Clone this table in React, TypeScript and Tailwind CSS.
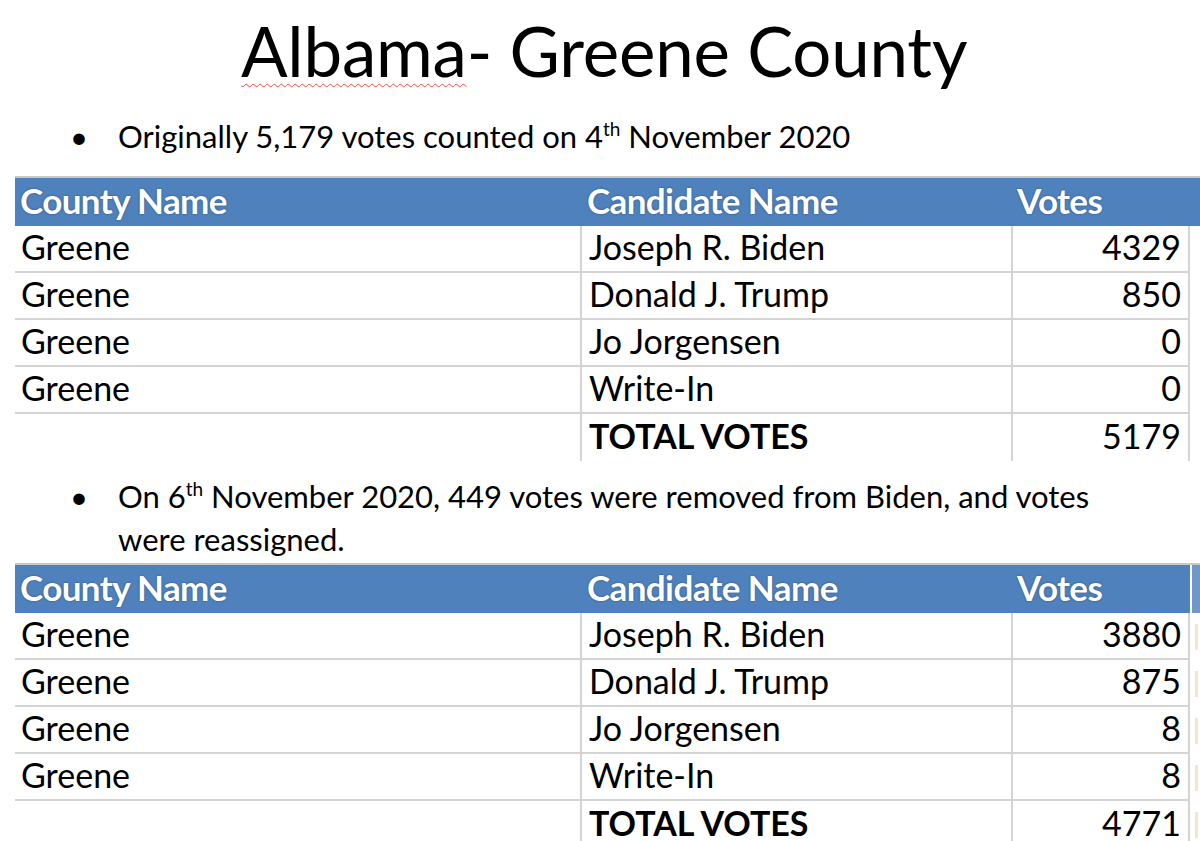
import React from 'react';

type Row = { county: string; candidate: string; votes: string; total?: boolean };

const first: Row[] = [
  { county: 'Greene', candidate: 'Joseph R. Biden', votes: '4329' },
  { county: 'Greene', candidate: 'Donald J. Trump', votes: '850' },
  { county: 'Greene', candidate: 'Jo Jorgensen', votes: '0' },
  { county: 'Greene', candidate: 'Write-In', votes: '0' },
  { county: '', candidate: 'TOTAL VOTES', votes: '5179', total: true },
];

const second: Row[] = [
  { county: 'Greene', candidate: 'Joseph R. Biden', votes: '3880' },
  { county: 'Greene', candidate: 'Donald J. Trump', votes: '875' },
  { county: 'Greene', candidate: 'Jo Jorgensen', votes: '8' },
  { county: 'Greene', candidate: 'Write-In', votes: '8' },
  { county: '', candidate: 'TOTAL VOTES', votes: '4771', total: true },
];

function VoteTable({ rows, extraCol }: { rows: Row[]; extraCol?: boolean }) {
  return (
    <div className="ml-[15px] w-[1185px]">
      {/* top rule */}
      <div className="h-[2px] bg-[#c8c8c8]" />
      {/* header */}
      <div className="flex h-[48px] bg-[#4f81bd] text-white font-bold text-[35px] [text-shadow:0_0_2px_rgba(0,0,0,0.45)]">
        <div className="w-[565px] pl-[5px] flex items-center pb-[4px] tracking-[-0.6px]">County Name</div>
        <div className="w-[431px] pl-[7px] flex items-center pb-[4px] tracking-[-0.6px]">Candidate Name</div>
        <div className="w-[179px] pl-[6px] flex items-center pb-[4px] tracking-[-0.6px]">Votes</div>
        {extraCol && <div className="flex-1 border-l-[2px] border-white bg-[#6f98c9]" />}
      </div>
      {rows.map((r, i) => (
        <div key={i} className="flex h-[47px] text-[34px] text-black">
          <div
            className={`w-[565px] pl-[6px] flex items-center pb-[4px] ${
              !r.total ? 'border-b-[2px] border-[#d4d4d4]' : ''
            }`}
          >
            {r.county}
          </div>
          <div
            className={`w-[431px] pl-[7px] flex items-center pb-[4px] border-l-[2px] border-[#d4d4d4] ${
              !r.total ? 'border-b-[2px]' : 'font-bold'
            }`}
          >
            {r.candidate}
          </div>
          <div
            className={`w-[179px] pr-[7px] flex items-center justify-end pb-[4px] border-l-[2px] border-r-[2px] border-[#d4d4d4] ${
              !r.total ? 'border-b-[2px]' : ''
            }`}
          >
            {r.votes}
          </div>
          {extraCol && (
            <div className="flex-1 pl-[5px] flex items-center">
              <div className="w-[3px] h-[26px] bg-[#f3e6cf]" />
            </div>
          )}
        </div>
      ))}
    </div>
  );
}

export default function App() {
  return (
    <div className="w-[1200px] h-[841px] overflow-hidden bg-white text-black font-['Lato','Open_Sans',sans-serif]">
      {/* Title */}
      <div className="pt-[11px] pl-[241px] text-[69px] leading-[80px] tracking-[-0.2px] whitespace-nowrap">
        <span className="underline decoration-wavy decoration-[#ff4a3d] decoration-[1px] underline-offset-[6px]">Albama</span>
        - Greene County
      </div>

      {/* Bullet 1 */}
      <div className="mt-[25px] flex text-[31px] leading-[40px] whitespace-nowrap">
        <div className="w-[118px] pl-[70px]">•</div>
        <div>
          Originally 5,179 votes counted on 4<sup className="text-[19px] -top-[12px]">th</sup> November 2020
        </div>
      </div>

      <div className="mt-[20px]">
        <VoteTable rows={first} />
      </div>

      {/* Bullet 2 */}
      <div className="mt-[14px] flex text-[31px] leading-[43px] whitespace-nowrap">
        <div className="w-[118px] pl-[70px]">•</div>
        <div>
          On 6<sup className="text-[19px] -top-[12px]">th</sup> November 2020, 449 votes were removed from Biden, and votes
          <br />
          were reassigned.
        </div>
      </div>

      <div className="mt-[2px]">
        <VoteTable rows={second} extraCol />
      </div>
    </div>
  );
}
